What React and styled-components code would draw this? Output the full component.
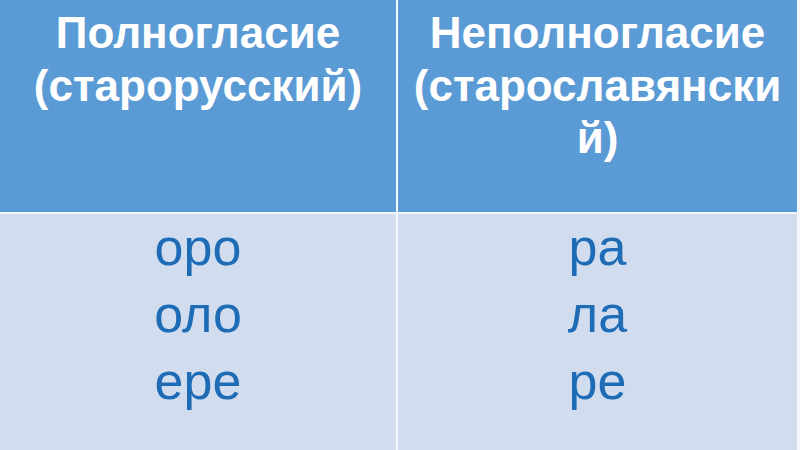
import React from "react";
import styled, { createGlobalStyle } from "styled-components";

const GlobalStyle = createGlobalStyle`
  html, body {
    margin: 0;
    padding: 0;
    background: #ffffff;
  }
  body {
    font-family: "Liberation Sans", Arial, sans-serif;
  }
`;

const Table = styled.div`
  width: 800px;
  height: 450px;
  display: grid;
  grid-template-columns: 396px 399px;
  grid-template-rows: 212px 1fr;
  gap: 2px;
  padding: 0 3px 0 0;
  box-sizing: border-box;
  background: #f4f7fb;
  overflow: hidden;
`;

const HeadCell = styled.div`
  background: #5b9bd5;
  color: #ffffff;
  font-weight: bold;
  font-size: 44px;
  line-height: 52.5px;
  text-align: center;
  padding: 7px 10px 0;
  overflow-wrap: anywhere;
`;

const BodyCell = styled.div`
  background: #d1ddef;
  color: #1e6cb6;
  font-size: 52px;
  line-height: 67px;
  text-align: center;
  padding-top: 0;
  display: flex;
  flex-direction: column;
  align-items: center;
`;

const Line = styled.span`
  display: block;
`;

const headers = ["Полногласие (старорусский)", "Неполногласие (старославянский)"];
const rows = [
  ["оро", "оло", "ере"],
  ["ра", "ла", "ре"],
];

export default function App() {
  return (
    <>
      <GlobalStyle />
      <Table>
        {headers.map((h) => (
          <HeadCell key={h}>{h}</HeadCell>
        ))}
        {rows.map((col, i) => (
          <BodyCell key={i}>
            {col.map((t) => (
              <Line key={t}>{t}</Line>
            ))}
          </BodyCell>
        ))}
      </Table>
    </>
  );
}
